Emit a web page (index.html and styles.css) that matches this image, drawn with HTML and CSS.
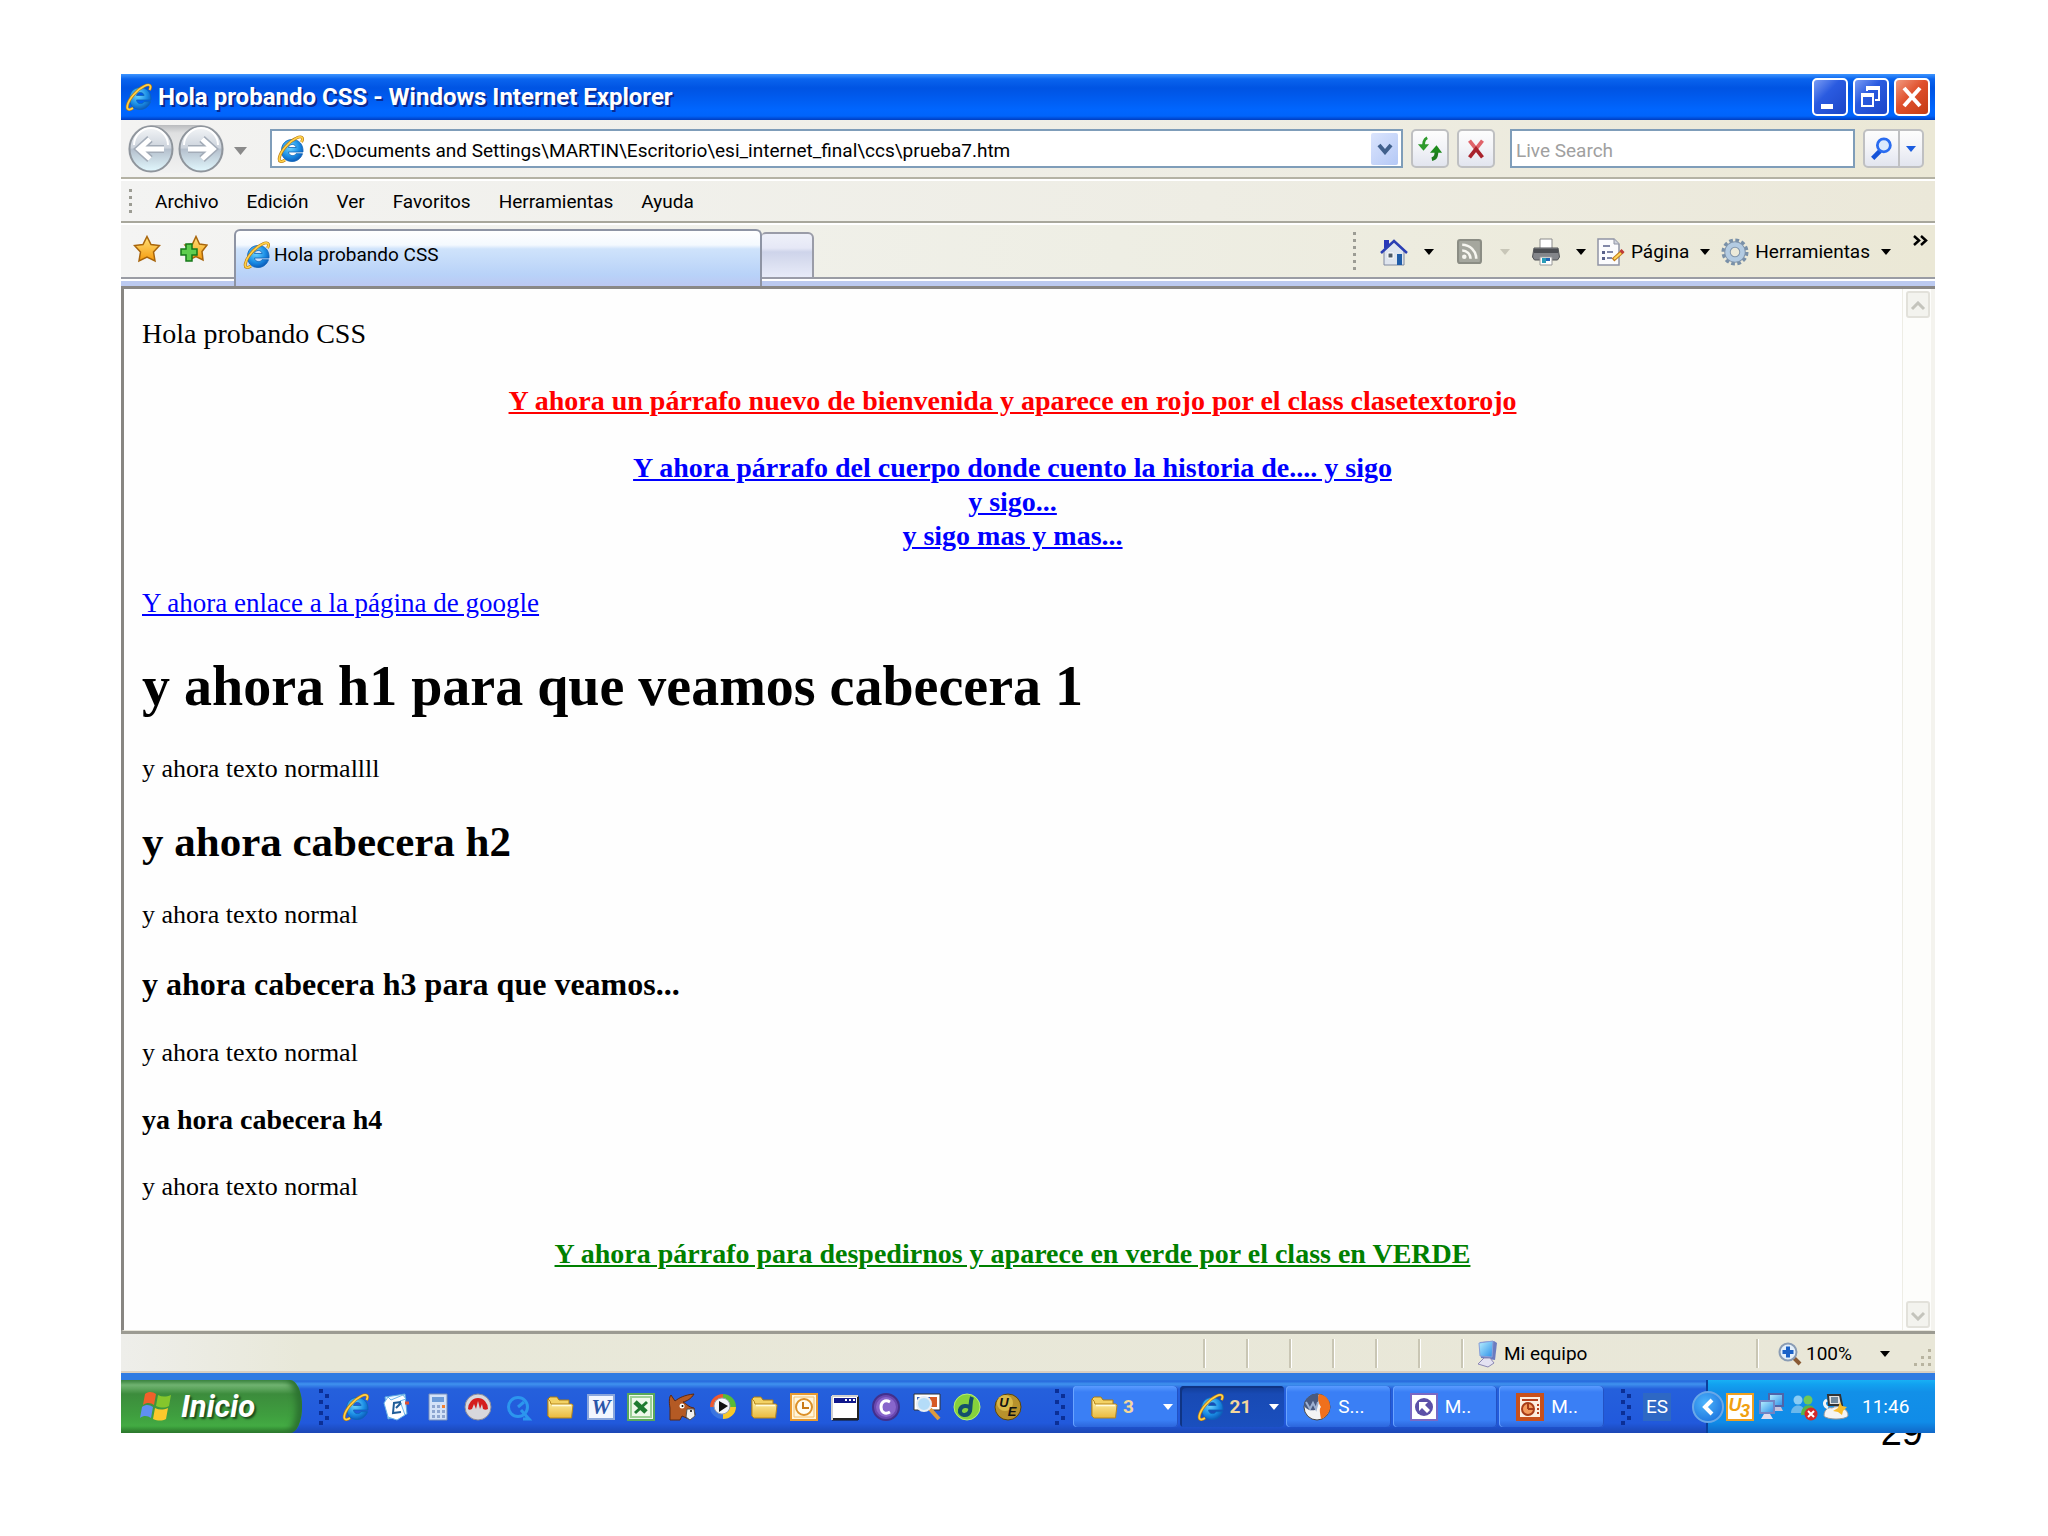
FILE: index.html
```
<!DOCTYPE html>
<html lang="es">
<head>
    <meta charset="utf-8">
    <title>Hola probando CSS</title>
    <link rel="stylesheet" href="styles.css">
</head>
<body>
    <!-- shared icons -->
    <svg class="defs" width="0" height="0" aria-hidden="true">
        <defs>
            <radialGradient id="ieBlue" cx="40%" cy="35%" r="70%">
                <stop offset="0" stop-color="#6fd6ff"/>
                <stop offset="0.6" stop-color="#1c8fe6"/>
                <stop offset="1" stop-color="#0a55b4"/>
            </radialGradient>
            <linearGradient id="folderFill" x1="0" y1="0" x2="0" y2="1">
                <stop offset="0" stop-color="#fff6b4"/>
                <stop offset="1" stop-color="#e9b93c"/>
            </linearGradient>
            <linearGradient id="starFill" x1="0" y1="0" x2="0" y2="1">
                <stop offset="0" stop-color="#ffe27a"/>
                <stop offset="1" stop-color="#f59a0c"/>
            </linearGradient>
            <linearGradient id="navFill" x1="0" y1="0" x2="0" y2="1">
                <stop offset="0" stop-color="#f4f6f8"/>
                <stop offset="0.48" stop-color="#ccd3dc"/>
                <stop offset="0.5" stop-color="#b4bfcc"/>
                <stop offset="1" stop-color="#e2f8fe"/>
            </linearGradient>
            <linearGradient id="screenFill" x1="0" y1="0" x2="1" y2="1">
                <stop offset="0" stop-color="#b9f0ff"/>
                <stop offset="1" stop-color="#2a8fe8"/>
            </linearGradient>
            <symbol id="ie" viewBox="0 0 28 28">
                <path d="M26 17H11.500c.4 2.500 2 3.600 4 3.600 1.600 0 2.800-.6 3.500-1.900H25.500C23.800 23.600 20 26.500 15 26.500 8.500 26.500 4.500 22 4.500 15.500S8.800 4.500 15.200 4.500C22 4.500 26.500 9.500 26 17zM11.500 12.500h7.600c-.4-2-1.800-3-3.800-3s-3.400 1.100-3.800 3z" fill="url(#ieBlue)" stroke="#0d63b8" stroke-width=".8"/>
                <path d="M24.500 7C27 2.500 24.500.5 19.500 3 12 6.500 3.500 16 2.300 23c-.6 4 2 4.500 5.700 2" fill="none" stroke="#b97a10" stroke-width="3"/>
                <path d="M24.500 7C27 2.500 24.500.5 19.500 3 12 6.500 3.500 16 2.300 23c-.6 4 2 4.500 5.700 2" fill="none" stroke="#ffd24a" stroke-width="1.700"/>
            </symbol>
            <symbol id="folder" viewBox="0 0 28 28">
                <path d="M2 23V6l2-2h7l2 3h10v4" fill="#f3d264" stroke="#a97a14"/>
                <path d="M5 11h21l1 1-1.500 13H4L2 23V6l2 2z" fill="url(#folderFill)" stroke="#b5851c"/>
                <path d="M6 12.500h19" stroke="#fffbdc" stroke-width="1.500"/>
            </symbol>
            <symbol id="down" viewBox="0 0 10 6">
                <path d="M0 0h10L5 6z" fill="currentColor"/>
            </symbol>
            <symbol id="dots" viewBox="0 0 10 36">
                <path d="M0 0h4v4H0zM0 11h4v4H0zM0 22h4v4H0zM0 32h4v4H0zM6 5h4v4H6zM6 16h4v4H6zM6 27h4v4H6z" fill="#0b2f96"/>
            </symbol>
        </defs>
    </svg>

    <div class="slide">
        <div class="screen">
            <header class="title-bar">
                <svg class="title-icon"><use href="#ie"/></svg>
                <h1 class="title-text">Hola probando CSS - Windows Internet Explorer</h1>
                <div class="window-buttons">
                    <button class="window-button" aria-label="Minimizar">
                        <svg viewBox="0 0 32 32"><path d="M7 23h12v5H7z" fill="#fff"/></svg>
                    </button>
                    <button class="window-button" aria-label="Restaurar">
                        <svg viewBox="0 0 32 32"><path d="M12 10V7h12v12h-4" fill="none" stroke="#fff" stroke-width="2"/><path d="M11 7h14" stroke="#fff" stroke-width="4"/><path d="M7 14h11v11H7z" fill="none" stroke="#fff" stroke-width="2"/><path d="M6 14h13" stroke="#fff" stroke-width="4"/></svg>
                    </button>
                    <button class="window-button close" aria-label="Cerrar">
                        <svg viewBox="0 0 32 32"><path d="M8 7l16 18M24 7L8 25" stroke="#fff" stroke-width="4"/></svg>
                    </button>
                </div>
            </header>

            <div class="address-row">
                <div class="nav-buttons">
                    <button class="nav-button" aria-label="Atrás">
                        <svg viewBox="0 0 46 48"><ellipse cx="23" cy="24" rx="21.500" ry="22.500" fill="url(#navFill)" stroke="#8f959c" stroke-width="2"/><path d="M6 20a17 17 0 0 1 34 0" fill="none" stroke="#fff" stroke-width="2"/><path d="M22 14L11 24l11 10M12 24h24" fill="none" stroke="#a3acb8" stroke-width="8"/><path d="M22 14L11 24l11 10M12 24h24" fill="none" stroke="#fff" stroke-width="5"/></svg>
                    </button>
                    <button class="nav-button" aria-label="Adelante">
                        <svg viewBox="0 0 46 48"><ellipse cx="23" cy="24" rx="21.500" ry="22.500" fill="url(#navFill)" stroke="#8f959c" stroke-width="2"/><path d="M6 20a17 17 0 0 1 34 0" fill="none" stroke="#fff" stroke-width="2"/><path d="M24 14l11 10-11 10M34 24H10" fill="none" stroke="#a3acb8" stroke-width="8"/><path d="M24 14l11 10-11 10M34 24H10" fill="none" stroke="#fff" stroke-width="5"/></svg>
                    </button>
                </div>
                <button class="nav-history" aria-label="Páginas recientes"><svg class="arrow big"><use href="#down"/></svg></button>
                <div class="address-box">
                    <svg class="box-icon"><use href="#ie"/></svg>
                    <input class="address-input" type="text" aria-label="Dirección" value="C:\Documents and Settings\MARTIN\Escritorio\esi_internet_final\ccs\prueba7.htm">
                    <button class="address-drop" aria-label="Mostrar direcciones">
                        <svg width="16" height="12" viewBox="0 0 16 12"><path d="M2 2l6 7 6-7" fill="none" stroke="#40608c" stroke-width="4"/></svg>
                    </button>
                </div>
                <button class="tool-button" aria-label="Actualizar">
                    <svg viewBox="0 0 28 28"><path d="M11 2C7 4 7 7 7 13" fill="none" stroke="#2f9a2c" stroke-width="3"/><path d="M1 9h12l-6 7z" fill="#2f9a2c"/><path d="M16 25c5-1 5-5 5-10" fill="none" stroke="#1c7a1b" stroke-width="4"/><path d="M14 18h13l-6-8z" fill="#1c8a1b"/></svg>
                </button>
                <button class="tool-button" aria-label="Detener">
                    <svg viewBox="0 0 28 28"><path d="M7 5l7 9 7-9" fill="none" stroke="#e0636a" stroke-width="4"/><path d="M7 23l7-9 7 9" fill="none" stroke="#a9222c" stroke-width="4"/></svg>
                </button>
                <input class="search-input" type="text" aria-label="Buscar" placeholder="Live Search">
                <div class="search-buttons">
                    <button class="search-go" aria-label="Buscar">
                        <svg viewBox="0 0 28 28"><path d="M12 16l-8 8" stroke="#1552d8" stroke-width="5"/><circle cx="16" cy="10" r="7" fill="#dce9fc" stroke="#2a6cf0" stroke-width="3"/></svg>
                    </button>
                    <button class="search-more" aria-label="Opciones de búsqueda"><svg class="arrow"><use href="#down"/></svg></button>
                </div>
            </div>

            <nav class="menu-row">
                <span class="grip short"></span>
                <button class="menu-item">Archivo</button>
                <button class="menu-item">Edición</button>
                <button class="menu-item">Ver</button>
                <button class="menu-item">Favoritos</button>
                <button class="menu-item">Herramientas</button>
                <button class="menu-item">Ayuda</button>
            </nav>

            <div class="tab-row">
                <div class="favorites">
                    <button class="icon-button" aria-label="Centro de favoritos">
                        <svg viewBox="0 0 28 28"><path d="M14 1.500l4 8 8.500 1-6 6.500 1.500 9-8-4-8 4 1.500-9-6-6.500 8.500-1z" fill="url(#starFill)" stroke="#a8650c" stroke-width="1.500"/></svg>
                    </button>
                    <button class="icon-button" aria-label="Agregar a favoritos">
                        <svg viewBox="0 0 28 28"><path d="M16 1.500l3.500 7.500 7.500 1-5 6.500 1 8.500-7-3.500-7 3.500 1.500-9-5.500-6 7.500-1z" fill="url(#starFill)" stroke="#a8650c" stroke-width="1.500"/><path d="M6 9h6v5h5v6h-5v6H6v-6H1v-6h5z" fill="#5fce4e" stroke="#16791a" stroke-width="1.500"/></svg>
                    </button>
                </div>
                <button class="tab">
                    <svg class="box-icon"><use href="#ie"/></svg>
                    <span>Hola probando CSS</span>
                </button>
                <button class="new-tab" aria-label="Nueva pestaña"></button>
                <div class="command-bar">
                    <span class="grip"></span>
                    <button class="command home" aria-label="Inicio">
                        <svg class="command-icon" viewBox="0 0 28 28"><path d="M4 2h5v8H4z" fill="#2a38b8"/><path d="M4 13L14 4l10 9v14H4z" fill="#dfe5ee" stroke="#8089a0"/><path d="M1 15L14 3l13 12" fill="none" stroke="#2b3fb4" stroke-width="2.500"/><path d="M17 16h5v11h-5z" fill="#1f5ca8"/><path d="M8 15h5v5H8z" fill="#4d5a68" stroke="#fff"/></svg>
                        <svg class="arrow"><use href="#down"/></svg>
                    </button>
                    <button class="command feeds" aria-label="Fuentes" disabled>
                        <svg class="command-icon small" viewBox="0 0 24 24"><rect x="1" y="1" width="22" height="22" rx="2" fill="#a5a79e" stroke="#8b8d84" stroke-width="2"/><circle cx="7" cy="17" r="2.200" fill="#f6f6f0"/><path d="M5 11a8 8 0 0 1 8 8M5 5.500A13.500 13.500 0 0 1 18.500 19" fill="none" stroke="#f6f6f0" stroke-width="2.500"/></svg>
                        <svg class="arrow"><use href="#down"/></svg>
                    </button>
                    <button class="command print" aria-label="Imprimir">
                        <svg class="command-icon" viewBox="0 0 28 28"><path d="M8 1h12v11H8z" fill="#fff" stroke="#8c8c8c"/><path d="M2 10h24l1.500 9-2 3h-23l-2-3z" fill="#84868a" stroke="#505256"/><path d="M2 11h24v4H2z" fill="#4c4e52"/><path d="M8 19h12v8H8z" fill="#fff" stroke="#999"/><path d="M10 20h4v5h-4z" fill="#2a9db8"/><path d="M14 20h4v3h-4z" fill="#2465b4"/></svg>
                        <svg class="arrow"><use href="#down"/></svg>
                    </button>
                    <button class="command">
                        <svg class="command-icon" viewBox="0 0 28 28"><path d="M1 1h16l5 5v21H1z" fill="#fbfbfd" stroke="#9094a4" stroke-width="1.500"/><path d="M17 1v5h5" fill="#cfd3de" stroke="#9094a4"/><path d="M6 8h7M10 14h6M10 20h5" stroke="#59618a" stroke-width="1.500"/><path d="M5 13h3v3H5zM5 19h3v3H5z" fill="#59618a"/><path d="M16 22l10-9" stroke="#c07a1c" stroke-width="4"/><path d="M17 21l7-6" stroke="#ffd65c" stroke-width="2"/><path d="M24 14.500l2-2" stroke="#c03a3a" stroke-width="4"/></svg>
                        <span>Página</span>
                        <svg class="arrow"><use href="#down"/></svg>
                    </button>
                    <button class="command">
                        <svg class="command-icon" viewBox="0 0 28 28"><circle cx="14" cy="14" r="11.500" fill="none" stroke="#7990a8" stroke-width="4" stroke-dasharray="3.600 2.420"/><circle cx="14" cy="14" r="7.500" fill="none" stroke="#8195ac" stroke-width="6.500"/><circle cx="14" cy="14" r="7.500" fill="none" stroke="#b3cbe2" stroke-width="4.500"/></svg>
                        <span>Herramientas</span>
                        <svg class="arrow"><use href="#down"/></svg>
                    </button>
                    <button class="overflow" aria-label="Más">
                        <svg width="15" height="11" viewBox="0 0 15 11"><path d="M1 1l5 4.500L1 10M8 1l5 4.500L8 10" fill="none" stroke="#000" stroke-width="2.500"/></svg>
                    </button>
                </div>
            </div>

            <div class="viewport">
                <main class="page">
                    <p>Hola probando CSS</p>
                    <p class="rojo">Y ahora un párrafo nuevo de bienvenida y aparece en rojo por el class clasetextorojo</p>
                    <p class="azul">Y ahora párrafo del cuerpo donde cuento la historia de.... y sigo<br>y sigo...<br>y sigo mas y mas...</p>
                    <p class="enlace"><a href="#">Y ahora enlace a la página de google</a></p>
                    <h1>y ahora h1 para que veamos cabecera 1</h1>
                    <p class="normal">y ahora texto normallll</p>
                    <h2>y ahora cabecera h2</h2>
                    <p class="normal">y ahora texto normal</p>
                    <h3>y ahora cabecera h3 para que veamos...</h3>
                    <p class="normal">y ahora texto normal</p>
                    <h4>ya hora cabecera h4</h4>
                    <p class="normal">y ahora texto normal</p>
                    <p class="verde">Y ahora párrafo para despedirnos y aparece en verde por el class en VERDE</p>
                </main>
                <div class="scrollbar">
                    <button class="scroll-button" aria-label="Subir" disabled><svg width="16" height="10" viewBox="0 0 16 10"><path d="M2 8l6-6 6 6" fill="none" stroke="#c4c4bc" stroke-width="3"/></svg></button>
                    <button class="scroll-button" aria-label="Bajar" disabled><svg width="16" height="10" viewBox="0 0 16 10"><path d="M2 2l6 6 6-6" fill="none" stroke="#c4c4bc" stroke-width="3"/></svg></button>
                </div>
            </div>

            <footer class="status-bar">
                <span class="pane"></span>
                <span class="pane"></span>
                <span class="pane"></span>
                <span class="pane"></span>
                <span class="pane"></span>
                <span class="pane"></span>
                <span class="pane zone">
                    <svg width="22" height="28" viewBox="0 0 22 28"><path d="M4 2l14-1 3 2-2 17-14-2z" fill="#6b7cc0"/><path d="M3 3l14-2-1 16-12-1z" fill="url(#screenFill)" stroke="#8aa0d8"/><path d="M8 18h6l4 5-6 4-10-3z" fill="#e4e2f2" stroke="#8c88b4"/></svg>
                    Mi equipo
                </span>
                <button class="pane zoom">
                    <svg width="24" height="24" viewBox="0 0 24 24"><path d="M15 15l7 7" stroke="#8a5a34" stroke-width="4"/><circle cx="10" cy="10" r="8.500" fill="#e3effb" stroke="#8a9cb4" stroke-width="2"/><path d="M10 4.500v11M4.500 10h11" stroke="#1b62c8" stroke-width="4"/></svg>
                    <span>100%</span>
                    <svg class="arrow"><use href="#down"/></svg>
                </button>
                <svg class="size-grip" width="20" height="20" viewBox="0 0 20 20"><path d="M16 1h3v3h-3zM16 8h3v3h-3zM9 8h3v3H9zM16 15h3v3h-3zM9 15h3v3H9zM2 15h3v3H2z" fill="#b8b4a0"/></svg>
            </footer>

            <div class="taskbar">
                <button class="start">
                    <svg width="34" height="32" viewBox="0 0 34 32"><path d="M6 3c4-3 8-2 11 0l-2 11c-3-2-7-3-11 0z" fill="#f0602a"/><path d="M19 4c4 2 8 2 13 0l-2 11c-4 2-8 2-13 0z" fill="#85c62c"/><path d="M3 16c4-3 8-2 11 0l-2 11c-3-2-7-3-11 0z" fill="#5f8ff2"/><path d="M16 17c4 2 8 2 13 0l-2 11c-4 2-8 2-13 0z" fill="#fbc92c"/></svg>
                    <span>Inicio</span>
                </button>
                <svg class="dots"><use href="#dots"/></svg>
                <div class="quick-launch">
                    <button class="icon-button" aria-label="Internet Explorer"><svg><use href="#ie"/></svg></button>
                    <button class="icon-button" aria-label="Outlook Express"><svg viewBox="0 0 28 28"><path d="M2 4l20-3 2 20-19 5z" fill="#eaf6ff" stroke="#5aa8e0"/><path d="M1 10l4-6 3 3 12-5 3 4-6 2 5 14-8 5-9-3z" fill="#fff" stroke="#6cb4e8"/><path d="M18 9l-7 1-1 10 8-1M13 15l5-5" fill="none" stroke="#1f5d98" stroke-width="2"/><path d="M22 10h4" stroke="#e05030" stroke-width="3"/></svg></button>
                    <button class="icon-button" aria-label="Calculadora"><svg viewBox="0 0 28 28"><path d="M5 1h18v26H5z" fill="#d3e2f8" stroke="#7890bc"/><path d="M8 4h12v5H8z" fill="#6c9bd8"/><path d="M8 12h3v3H8zM13 12h3v3h-3zM8 17h3v3H8zM13 17h3v3h-3zM18 17h3v3h-3zM8 22h3v3H8zM13 22h3v3h-3zM18 22h3v3h-3z" fill="#8ea6d0"/><path d="M18 12h3v3h-3z" fill="#f08030"/></svg></button>
                    <button class="icon-button" aria-label="Nero"><svg viewBox="0 0 28 28"><circle cx="14" cy="14" r="13" fill="#d8d8dc" stroke="#8c8c98"/><path d="M4 16a10 11 0 0 1 20 0c-2 1-3 1-5 0l-1-5-2 5-2-8-2 8-2-5-2 5c-2 1-3 1-4 0z" fill="#d41e1e"/></svg></button>
                    <button class="icon-button" aria-label="QuickTime"><svg viewBox="0 0 28 28"><circle cx="13" cy="14" r="9.500" fill="none" stroke="#2c96ee" stroke-width="3"/><path d="M13 14l6-5M16 17l8 9h-6" fill="none" stroke="#2c96ee" stroke-width="3"/></svg></button>
                    <button class="icon-button" aria-label="Carpeta"><svg><use href="#folder"/></svg></button>
                    <button class="icon-button" aria-label="Word"><svg viewBox="0 0 28 28"><path d="M1 2h26v24H1z" fill="#f2f6ff" stroke="#8aa6dc" stroke-width="2"/><text class="glyph serif" x="14" y="21" fill="#2a55a8">W</text></svg></button>
                    <button class="icon-button" aria-label="Excel"><svg viewBox="0 0 28 28"><path d="M1 1h26v26H1z" fill="#eef8ea" stroke="#5aa85a" stroke-width="2"/><path d="M4 4h20v20H4z" fill="none" stroke="#9ccf96" stroke-width="2"/><path d="M8 9l11 10" stroke="#1e7a30" stroke-width="5"/><path d="M20 9L8 20" stroke="#1e7a30" stroke-width="3"/></svg></button>
                    <button class="icon-button" aria-label="eMule"><svg viewBox="0 0 28 28"><path d="M2 27V15C1 9 1 4 3 2l4 6c4-3 9-6 19-7-3 5-7 7-11 8 4 2 5 5 11 6l1 7-6 4-7-3-2 4z" fill="#b45a24" stroke="#5c2810"/><path d="M19 16l7 0 1 7-5 4-4-3z" fill="#f2f0ec" stroke="#555"/><circle cx="14" cy="13" r="2.500" fill="#fff"/><circle cx="14.500" cy="13" r="1" fill="#000"/><circle cx="23" cy="18" r="1" fill="#000"/></svg></button>
                    <button class="icon-button" aria-label="Reproductor de Windows Media"><svg viewBox="0 0 28 28"><path d="M14 14V1A13 13 0 0 0 1 14z" fill="#ee5a30"/><path d="M14 14V1a13 13 0 0 1 13 13z" fill="#58ba38"/><path d="M14 14H1a13 12 0 0 0 13 12z" fill="#3a74e0"/><path d="M14 14h13a13 12 0 0 1-13 12z" fill="#f8c828"/><circle cx="13" cy="13" r="8" fill="#f4f6fa" stroke="#98a0b0"/><path d="M10 8l9 5-9 6z" fill="#111"/></svg></button>
                    <button class="icon-button" aria-label="Mis documentos"><svg><use href="#folder"/></svg></button>
                    <button class="icon-button" aria-label="Outlook"><svg viewBox="0 0 28 28"><path d="M1 1h26v26H1z" fill="#fff6dc" stroke="#e89a30" stroke-width="2"/><path d="M4 4h20v20H4z" fill="none" stroke="#f4c070"/><circle cx="14" cy="14" r="8" fill="#fffdf4" stroke="#dc9028" stroke-width="2"/><path d="M13 9v6h6" fill="none" stroke="#c87a18" stroke-width="2"/></svg></button>
                    <button class="icon-button" aria-label="Símbolo del sistema"><svg viewBox="0 0 28 28"><path d="M1 3h26v24H1z" fill="#fff" stroke="#111"/><path d="M1 3h26M1 3v24" stroke="#d0d0d0" stroke-width="2"/><path d="M3 5h22v5H3z" fill="#10188c"/><path d="M14 7h2M18 7h2M22 7h2" stroke="#fff" stroke-width="2"/><path d="M27 4v22H2" fill="none" stroke="#222" stroke-width="2"/></svg></button>
                    <button class="icon-button" aria-label="Cliente"><svg viewBox="0 0 28 28"><circle cx="14" cy="14" r="13" fill="#6a48b0" stroke="#42308c" stroke-width="2"/><circle cx="14" cy="14" r="10" fill="#8866cc"/><path d="M18 9c-5-3-9 0-9 5s4 8 9 5" fill="none" stroke="#fff" stroke-width="3"/></svg></button>
                    <button class="icon-button" aria-label="Visor de imágenes"><svg viewBox="0 0 28 28"><path d="M1 1h26v16H1z" fill="#fff" stroke="#333"/><path d="M4 4h20v10H4z" fill="#3c62b8"/><path d="M17 4h7v10h-7z" fill="#d65a24"/><path d="M17 16l9 10" stroke="#dc9a3c" stroke-width="4"/><circle cx="11" cy="11" r="7" fill="#b4dcf8" stroke="#e8eef4" stroke-width="2"/></svg></button>
                    <button class="icon-button" aria-label="Dreamweaver"><svg viewBox="0 0 28 28"><circle cx="14" cy="14" r="13" fill="#86d23c" stroke="#b8f070"/><path d="M19 4c-2 5-1 9-2 14-2 6-11 5-10-1 1-5 8-5 10-2" fill="none" stroke="#14506c" stroke-width="4"/></svg></button>
                    <button class="icon-button" aria-label="UltraEdit"><svg viewBox="0 0 28 28"><circle cx="14" cy="14" r="13" fill="#b8922c" stroke="#5c4408"/><circle cx="11" cy="10" r="8" fill="#d8b848"/><text class="glyph tiny" x="10" y="14" fill="#111">U</text><text class="glyph tiny" x="18" y="23" fill="#111">E</text></svg></button>
                </div>
                <svg class="dots"><use href="#dots"/></svg>
                <div class="task-buttons">
                    <button class="task group"><svg><use href="#folder"/></svg><b>3</b><svg class="arrow"><use href="#down"/></svg></button>
                    <button class="task group active"><svg><use href="#ie"/></svg><b>21</b><svg class="arrow"><use href="#down"/></svg></button>
                    <button class="task"><svg viewBox="0 0 28 28"><circle cx="14" cy="14" r="13" fill="#f4f4f4" stroke="#444"/><path d="M1 12C2 4 10 0 15 1c2 5-1 12-3 16-5 1-10-1-11-5z" fill="#485a80"/><path d="M16 1c8 1 12 8 11 15-2 6-6 9-9 10-1-7-2-10 0-12-2-3-4-8-2-13z" fill="#f0701c"/><path d="M3 9l4 7 3-6 3 6 2-7" fill="none" stroke="#9db0d0" stroke-width="2"/></svg><span>S...</span></button>
                    <button class="task"><svg viewBox="0 0 28 28"><path d="M1 1h26v26H1z" fill="#fff" stroke="#7a68c4" stroke-width="2"/><circle cx="14" cy="14" r="9" fill="#5c50a8"/><path d="M9 9h9l-3 3 5 5-3 3-5-5-3 3z" fill="#fff"/></svg><span>M..</span></button>
                    <button class="task"><svg viewBox="0 0 28 28"><path d="M2 2h24v24H2z" fill="#fdeee0" stroke="#c8501c" stroke-width="4"/><path d="M6 7h16" stroke="#b8401c" stroke-width="2"/><circle cx="12" cy="16" r="6" fill="#f49a5c" stroke="#a83c18" stroke-width="2"/><path d="M12 16v-6M12 16h6" stroke="#a83c18" stroke-width="2"/><path d="M22 11v12" stroke="#b8401c" stroke-width="2" stroke-dasharray="2 2"/></svg><span>M..</span></button>
                </div>
                <svg class="dots"><use href="#dots"/></svg>
                <button class="language">ES</button>
                <div class="tray">
                    <button class="tray-toggle" aria-label="Mostrar iconos ocultos"><svg width="14" height="18" viewBox="0 0 14 18"><path d="M11 2L4 9l7 7" fill="none" stroke="#fff" stroke-width="4"/></svg></button>
                    <div class="tray-icons">
                        <svg viewBox="0 0 28 28"><path d="M1 1h26v26H1z" fill="#fff" stroke="#f0a020" stroke-width="2"/><text class="glyph italic" x="9" y="18" fill="#f0a010">U</text><text class="glyph italic" x="19" y="24" fill="#f0a010">3</text></svg>
                        <svg viewBox="0 0 28 28"><path d="M11 1h14v12H11z" fill="url(#screenFill)" stroke="#5064a8" stroke-width="2"/><path d="M15 14h8l2 4H13z" fill="#c8c4dc"/><path d="M2 8h14v12H2z" fill="url(#screenFill)" stroke="#7284c4" stroke-width="2"/><path d="M6 21h6l3 5H3z" fill="#e0dcec"/></svg>
                        <svg viewBox="0 0 28 28"><circle cx="8" cy="7" r="4.500" fill="#8accf4"/><path d="M1 20c0-10 14-10 14 0z" fill="#6ab8ec"/><circle cx="18" cy="7" r="4.500" fill="#70c858"/><path d="M11 22c0-13 15-13 15 0z" fill="#58b444"/><circle cx="21" cy="21" r="6.500" fill="#d42a2a"/><path d="M18 18l6 6M24 18l-6 6" stroke="#fff" stroke-width="2"/></svg>
                        <svg viewBox="0 0 28 28"><path d="M6 2h12l2 10H7z" fill="#e4e4e4" stroke="#333" stroke-width="2"/><path d="M9 4h7v6H9z" fill="#70889c"/><path d="M2 23c0-7 5-9 8-8 6-4 17 1 16 8-3 4-21 4-24 0z" fill="#f4f4f4" stroke="#999"/><path d="M5 7c-4 2-3 6 1 8" fill="none" stroke="#f4f4f4" stroke-width="3"/><path d="M18 9l2 4 5 1-4 4-1 4-4-3-5-1 5-3z" fill="#f8bc2c"/></svg>
                    </div>
                    <time class="clock">11:46</time>
                </div>
            </div>
        </div>
        <div class="slide-number">29</div>
    </div>
</body>
</html>
```

FILE: styles.css
```
* {
    box-sizing: border-box;
}

body {
    margin: 0;
    background-color: #fff;
    font-family: Roboto, "Liberation Sans", sans-serif;
    font-size: 19px;
    color: #000;
}

button,
input {
    font: inherit;
    color: inherit;
    margin: 0;
    padding: 0;
    border: none;
    background: none;
}

.defs {
    position: absolute;
}

.slide {
    padding: 74px 113px 80px 121px;
}

.screen {
    background-color: #fff;
}

.arrow {
    width: 10px;
    height: 6px;
    flex: none;
}

.arrow.big {
    width: 13px;
    height: 8px;
    color: #8a8a8a;
}

.box-icon {
    width: 28px;
    height: 28px;
    flex: none;
}

.icon-button {
    width: 28px;
    height: 28px;
    flex: none;
}

.icon-button svg {
    display: block;
    width: 28px;
    height: 28px;
}

/* title bar */
.title-bar {
    display: flex;
    align-items: center;
    height: 46px;
    padding: 0 5px 0 4px;
    background: linear-gradient(#3d95ff 0, #0a64ee 5px, #0054e3 14px, #0058ea 20px, #0066ff 36px, #0064fb 42px, #003dc0 46px);
}

.title-icon {
    width: 28px;
    height: 30px;
    margin-right: 5px;
}

.title-text {
    flex: 1;
    margin: 0;
    font-size: 24px;
    font-weight: bold;
    color: #fff;
    text-shadow: 2px 2px 0 #0a2a90;
}

.window-buttons {
    display: flex;
    gap: 5px;
}

.window-button {
    width: 36px;
    height: 38px;
    border: 2px solid #fff;
    border-radius: 5px;
    background: linear-gradient(135deg, #7a9cf4, #2a5be0 40%, #1c46c8);
}

.window-button svg {
    display: block;
    width: 32px;
    height: 34px;
}

.window-button.close {
    background: linear-gradient(135deg, #f09a80, #e0502c 45%, #c43c14);
}

/* address row */
.address-row {
    display: flex;
    align-items: center;
    gap: 8px;
    height: 59px;
    padding: 0 11px 0 7px;
    background: linear-gradient(to right, #f3f3f2, #eeede4 60%, #ebe8d6);
    border-bottom: 2px solid #b4b2a4;
}

.nav-buttons {
    display: flex;
    gap: 4px;
    border-radius: 26px;
    background: linear-gradient(#b9bbbe 0, #dfe0e1 8px, #f1f1f1 100%);
}

.nav-button svg {
    display: block;
    width: 46px;
    height: 48px;
}

.nav-history {
    width: 16px;
    margin-right: 14px;
}

.address-box {
    display: flex;
    align-items: center;
    flex: 1;
    height: 39px;
    padding: 0 3px 0 5px;
    border: 2px solid #7f9db9;
    background-color: #fff;
}

.address-input {
    flex: 1;
    min-width: 0;
    margin-left: 4px;
    padding-top: 3px;
}

.address-drop {
    width: 27px;
    height: 32px;
    border-radius: 2px;
    background: linear-gradient(135deg, #dbe5fd, #b4c8f6);
}

.tool-button,
.search-buttons {
    height: 39px;
    border: 2px solid #bfc0c2;
    border-radius: 5px;
    background: linear-gradient(#fdfdfd, #f2f3f7 50%, #e2e5ef);
}

.tool-button {
    width: 38px;
    padding: 0 4px;
}

.tool-button svg,
.search-go svg {
    display: block;
    width: 26px;
    height: 26px;
}

.search-input {
    width: 345px;
    height: 39px;
    margin-left: 7px;
    padding: 3px 4px 0;
    border: 2px solid #7f9db9;
    background-color: #fff;
}

.search-input::placeholder {
    color: #a0a0a0;
    opacity: 1;
}

.search-buttons {
    display: flex;
    width: 61px;
}

.search-go {
    flex: 1;
    padding-left: 4px;
    border-right: 2px solid #bfc0c2;
}

.search-more {
    width: 22px;
    color: #1a5ce0;
}

.search-more .arrow {
    display: block;
    margin: 0 auto;
}

/* menu */
.menu-row {
    display: flex;
    align-items: center;
    gap: 28px;
    height: 44px;
    padding-left: 8px;
    background: linear-gradient(to right, #f3f3f2, #eeede4 60%, #ebe8d9);
    border-top: 2px solid #fff;
    border-bottom: 2px solid #a8a79c;
}

.grip {
    width: 3px;
    height: 40px;
    flex: none;
    background: repeating-linear-gradient(#9c9c94 0, #9c9c94 3px, transparent 3px, transparent 7px);
}

.grip.short {
    height: 24px;
    margin-right: -5px;
}

/* tabs and command bar */
.tab-row {
    display: flex;
    align-items: stretch;
    height: 66px;
    border-top: 2px solid #fff;
    border-bottom: 3px solid #8a8886;
    background: linear-gradient(transparent 52px, #9a9ca4 52px, #9a9ca4 54px, #fff 54px, #fff 56px, #bccaf0 56px), linear-gradient(to right, #f4f4f3, #eeeee4 55%, #ebe8d6);
}

.favorites {
    display: flex;
    gap: 19px;
    align-items: center;
    padding: 0 26px 13px 12px;
}

.tab {
    display: flex;
    align-items: center;
    flex: 0 1 528px;
    gap: 3px;
    margin-top: 4px;
    padding: 0 0 8px 7px;
    border: 2px solid #8e94a4;
    border-bottom: none;
    border-radius: 6px 6px 0 0;
    background: linear-gradient(#fff 0, #f4f9fe 14px, #cfe3fb 18px, #b8d2f8 44px, #bcc8f2 100%);
}

.new-tab {
    width: 52px;
    height: 47px;
    margin-top: 7px;
    border: 2px solid #9a9ca8;
    border-left: none;
    border-radius: 4px 6px 0 0;
    background: linear-gradient(#eef0f9 0, #e6e8f6 14px, #ced4ea 18px, #e8ebf8 100%);
}

.command-bar {
    display: flex;
    align-items: center;
    margin-left: auto;
    padding: 0 7px 8px 0;
}

.command {
    display: flex;
    align-items: center;
    gap: 6px;
    margin-right: 11px;
}

.command-icon {
    width: 28px;
    height: 28px;
}

.command-icon.small {
    width: 25px;
    height: 25px;
}

.command .arrow {
    margin-left: 5px;
}

.command.home {
    margin: 0 23px 0 24px;
}

.command.home .arrow,
.command.print .arrow {
    margin-left: 10px;
}

.command.feeds {
    margin-right: 22px;
    color: #c8c6b8;
}

.command.feeds .arrow {
    margin-left: 12px;
}

.overflow {
    align-self: flex-start;
    margin: 3px 0 0 11px;
}

/* page */
.viewport {
    display: flex;
    border-left: 3px solid #888682;
    border-right: 4px solid #f4f3ee;
    border-bottom: 1px solid #e8e6dc;
    background-color: #fefefe;
}

.page {
    flex: 1;
    padding: 28px 19px 26px 18px;
    font-family: "Liberation Serif", serif;
    font-size: 28px;
    line-height: 34px;
}

.page p,
.page h1,
.page h2,
.page h3,
.page h4 {
    margin: 0 0 33px;
}

.page h1 {
    font-size: 56px;
    line-height: 66px;
}

.page h2 {
    font-size: 43px;
    line-height: 46px;
}

.page h3 {
    font-size: 32px;
    line-height: 38px;
}

.page h4 {
    font-size: 28px;
}

.page .normal {
    font-size: 26px;
}

.page .enlace {
    font-size: 27px;
}

.rojo,
.azul,
.verde {
    font-weight: bold;
    text-align: center;
    text-decoration: underline;
}

.rojo {
    color: #f00;
}

.azul {
    color: #00f;
}

.verde {
    color: #008000;
}

.enlace a {
    color: #00f;
}

.scrollbar {
    display: flex;
    flex-direction: column;
    justify-content: space-between;
    width: 29px;
    padding: 2px 1px 2px 3px;
    border-left: 1px solid #eeede5;
    background-color: #fdfdfb;
}

.scroll-button {
    height: 27px;
    border: 2px solid #e2e1da;
    border-radius: 3px;
    background-color: #f3f3ee;
}

/* status bar */
.status-bar {
    display: flex;
    justify-content: flex-end;
    height: 42px;
    padding: 5px 3px 3px 0;
    border-top: 3px solid #9c9b92;
    border-bottom: 2px solid #d9cfc0;
    background: linear-gradient(to right, #eeeeea, #e8e8d9 10%, #e9e7d8);
}

.pane {
    width: 43px;
    border-left: 2px solid #c9c6b4;
    box-shadow: inset 1px 0 0 #fff;
}

.pane.zone {
    display: flex;
    align-items: center;
    gap: 6px;
    width: 295px;
    padding-left: 13px;
}

.pane.zoom {
    display: flex;
    align-items: center;
    gap: 4px;
    width: 156px;
    padding-left: 20px;
}

.zoom .arrow {
    margin-left: 24px;
}

.size-grip {
    align-self: flex-end;
}

/* taskbar */
.taskbar {
    display: flex;
    align-items: center;
    height: 60px;
    padding-top: 7px;
    color: #fff;
    background: linear-gradient(#2f7be2 0, #2f7be2 7px, #2667dc 8px, #3f92ee 11px, #2560dc 16px, #2159dc 50px, #1b46b4 60px);
}

.start {
    display: flex;
    align-items: center;
    gap: 8px;
    align-self: stretch;
    width: 181px;
    padding-left: 18px;
    border-radius: 0 12px 12px 0 / 0 26px 26px 0;
    font-size: 31px;
    font-style: italic;
    font-weight: bold;
    text-shadow: 2px 2px 2px #1c4a1c;
    background: linear-gradient(#4b9450 0, #74b674 5px, #3c8c3c 14px, #3f9f3f 36px, #43ab43 46px, #2c7c2c 100%);
    box-shadow: inset -6px 0 6px #2c7230;
}

.dots {
    width: 10px;
    height: 36px;
    flex: none;
    margin-left: 17px;
}

.quick-launch {
    display: flex;
    justify-content: space-between;
    flex: 0 0 680px;
    margin: 0 16px 0 13px;
}

.task-buttons {
    display: flex;
    gap: 2px;
    flex: 1;
    margin-left: 8px;
}

.task {
    display: flex;
    align-items: center;
    flex: 1;
    gap: 7px;
    height: 41px;
    padding-left: 17px;
    border-radius: 4px;
    background: linear-gradient(#5a9bff 0, #3a7ff5 6px, #3a7ff5 34px, #2c66dc 100%);
    box-shadow: inset 1px 0 0 #6aa4ff, inset -1px 0 0 #2352c4;
}

.task svg {
    width: 28px;
    height: 28px;
    flex: none;
}

.task .arrow {
    width: 10px;
    height: 6px;
    margin-left: auto;
    margin-right: 5px;
}

.task.group {
    gap: 5px;
}

.task b {
    color: #f4d79c;
}

.task.active {
    background: linear-gradient(#123c94, #184ab4 8px, #1a4fbe);
    box-shadow: inset 2px 2px 0 #0f3484;
}

.language {
    height: 28px;
    margin: 0 35px 0 12px;
    padding: 0 3px;
    background-color: #2e68c4;
}

.tray {
    display: flex;
    align-items: center;
    align-self: stretch;
    width: 229px;
    border-left: 2px solid #0b3f9c;
    background: linear-gradient(#18b0f4 0, #12a2f0 4px, #1290e8 12px, #108ce8 42px, #1068c8 100%);
    background-clip: padding-box;
}

.tray-toggle {
    width: 32px;
    height: 32px;
    margin-left: -16px;
    flex: none;
    border: 2px solid #6aa8e8;
    border-radius: 50%;
    background: radial-gradient(circle at 40% 35%, #4cb4fc, #1468d8);
}

.tray-toggle svg {
    display: block;
    margin: 0 auto;
}

.tray-icons {
    display: flex;
    gap: 4px;
    margin-left: 2px;
}

.tray-icons svg {
    width: 28px;
    height: 28px;
}

.clock {
    margin-left: 12px;
}

.glyph {
    font-family: "Liberation Sans", sans-serif;
    font-size: 18px;
    font-weight: bold;
    text-anchor: middle;
}

.glyph.serif {
    font-family: "Liberation Serif", serif;
    font-size: 22px;
    font-style: italic;
}

.glyph.tiny {
    font-size: 13px;
    font-style: italic;
}

.glyph.italic {
    font-style: italic;
}

/* slide number, its upper half is cut off by the screen */
.slide-number {
    display: flex;
    justify-content: flex-end;
    align-items: flex-end;
    height: 18px;
    overflow: hidden;
    padding-right: 12px;
    font-family: "Liberation Sans", sans-serif;
    font-size: 38px;
    line-height: 38px;
}
```
